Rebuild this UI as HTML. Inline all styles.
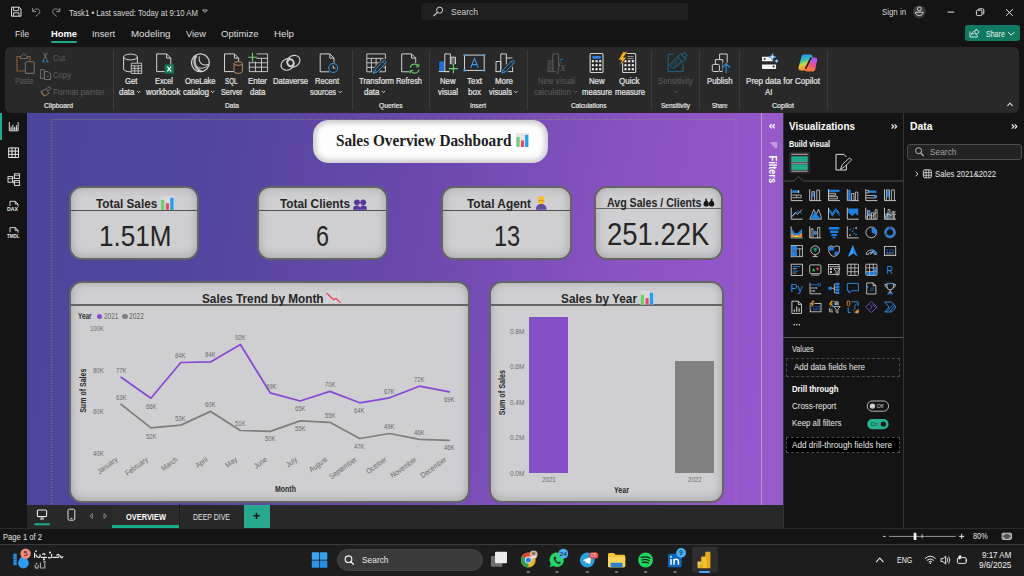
<!DOCTYPE html>
<html><head><meta charset="utf-8"><title>Power BI Desktop</title>
<style>
html,body{margin:0;padding:0;background:#141414;}
body{width:1024px;height:576px;overflow:hidden;position:relative;font-family:"Liberation Sans",sans-serif;}
#root{position:absolute;left:0;top:0;width:1024px;height:576px;overflow:hidden;background:#141414;}
svg{overflow:visible}
.a,.b{position:absolute;white-space:pre;transform-origin:0 50%;}
.a{font-family:"Liberation Sans",sans-serif;}
.b{font-family:"Liberation Serif",serif;}
</style></head><body><div id="root">
<span class="a" style="top:9px;font-size:8.8px;line-height:8.8px;color:#d6d6d6;left:68.60px;transform:scaleX(0.8817);">Task1 • Last saved: Today at 9:10 AM</span>
<div style="position:absolute;left:421px;top:3px;width:267px;height:17px;background:#1f1f1f;border-radius:3px;"></div>
<span class="a" style="top:8px;font-size:9.2px;line-height:9.2px;color:#cfcfcf;left:451.00px;transform:scaleX(0.9270);">Search</span>
<span class="a" style="top:8px;font-size:8.8px;line-height:8.8px;color:#d8d8d8;left:882.00px;transform:scaleX(0.8920);">Sign in</span>
<span class="a" style="top:29px;font-size:9.6px;line-height:9.6px;color:#dedede;left:15.00px;transform:scaleX(0.9051);">File</span>
<span class="a" style="top:29px;font-size:9.6px;line-height:9.6px;font-weight:700;color:#ffffff;left:51.00px;transform:scaleX(0.9754);">Home</span>
<span class="a" style="top:29px;font-size:9.6px;line-height:9.6px;color:#dedede;left:92.00px;transform:scaleX(0.9583);">Insert</span>
<span class="a" style="top:29px;font-size:9.6px;line-height:9.6px;color:#dedede;left:131.00px;transform:scaleX(1.0144);">Modeling</span>
<span class="a" style="top:29px;font-size:9.6px;line-height:9.6px;color:#dedede;left:186.00px;transform:scaleX(0.9697);">View</span>
<span class="a" style="top:29px;font-size:9.6px;line-height:9.6px;color:#dedede;left:221.00px;transform:scaleX(0.9905);">Optimize</span>
<span class="a" style="top:29px;font-size:9.6px;line-height:9.6px;color:#dedede;left:274.00px;transform:scaleX(1.0135);">Help</span>
<div style="position:absolute;left:51.2px;top:41px;width:25.6px;height:1.9px;background:#1aab8c;border-radius:1px;"></div>
<div style="position:absolute;left:964.5px;top:25.3px;width:55.6px;height:16.1px;background:#11795f;border-radius:3px;"></div>
<span class="a" style="top:30px;font-size:8.6px;line-height:8.6px;color:#e8f5f1;left:985.50px;transform:scaleX(0.8196);">Share</span>
<div style="position:absolute;left:5px;top:46.6px;width:1014px;height:66px;background:#292929;border-radius:6px;"></div>
<div style="position:absolute;left:112.5px;top:50px;width:1px;height:60px;background:#3b3b3b;"></div>
<div style="position:absolute;left:352px;top:50px;width:1px;height:60px;background:#3b3b3b;"></div>
<div style="position:absolute;left:428.5px;top:50px;width:1px;height:60px;background:#3b3b3b;"></div>
<div style="position:absolute;left:527px;top:50px;width:1px;height:60px;background:#3b3b3b;"></div>
<div style="position:absolute;left:651px;top:50px;width:1px;height:60px;background:#3b3b3b;"></div>
<div style="position:absolute;left:699px;top:50px;width:1px;height:60px;background:#3b3b3b;"></div>
<div style="position:absolute;left:739px;top:50px;width:1px;height:60px;background:#3b3b3b;"></div>
<div style="position:absolute;left:827px;top:50px;width:1px;height:60px;background:#3b3b3b;"></div>
<span class="a" style="top:77px;font-size:8.6px;line-height:8.6px;color:#5e5e5e;left:14.50px;transform:scaleX(0.8415);">Paste</span>
<span class="a" style="top:54px;font-size:8.6px;line-height:8.6px;color:#5e5e5e;left:53.10px;transform:scaleX(0.9121);">Cut</span>
<span class="a" style="top:71px;font-size:8.6px;line-height:8.6px;color:#5e5e5e;left:53.10px;transform:scaleX(0.8972);">Copy</span>
<span class="a" style="top:88px;font-size:8.6px;line-height:8.6px;color:#5e5e5e;left:53.10px;transform:scaleX(0.9250);">Format painter</span>
<span class="a" style="top:102px;font-size:7.4px;line-height:7.4px;color:#ececec;left:44.00px;transform:scaleX(0.9165);-webkit-text-stroke:.18px;">Clipboard</span>
<span class="a" style="top:77px;font-size:8.6px;line-height:8.6px;color:#e4e4e4;left:124.50px;transform:scaleX(0.9019);-webkit-text-stroke:.22px;">Get</span>
<span class="a" style="top:88px;font-size:8.6px;line-height:8.6px;color:#e4e4e4;left:119.00px;transform:scaleX(0.9262);-webkit-text-stroke:.22px;">data</span>
<span class="a" style="top:77px;font-size:8.6px;line-height:8.6px;color:#e4e4e4;left:154.50px;transform:scaleX(0.8565);-webkit-text-stroke:.22px;">Excel</span>
<span class="a" style="top:88px;font-size:8.6px;line-height:8.6px;color:#e4e4e4;left:146.00px;transform:scaleX(0.9380);-webkit-text-stroke:.22px;">workbook</span>
<span class="a" style="top:77px;font-size:8.6px;line-height:8.6px;color:#e4e4e4;left:185.00px;transform:scaleX(0.8742);-webkit-text-stroke:.22px;">OneLake</span>
<span class="a" style="top:88px;font-size:8.6px;line-height:8.6px;color:#e4e4e4;left:183.00px;transform:scaleX(0.9380);-webkit-text-stroke:.22px;">catalog</span>
<span class="a" style="top:77px;font-size:8.6px;line-height:8.6px;color:#e4e4e4;left:225.00px;transform:scaleX(0.7266);-webkit-text-stroke:.22px;">SQL</span>
<span class="a" style="top:88px;font-size:8.6px;line-height:8.6px;color:#e4e4e4;left:221.00px;transform:scaleX(0.8494);-webkit-text-stroke:.22px;">Server</span>
<span class="a" style="top:77px;font-size:8.6px;line-height:8.6px;color:#e4e4e4;left:248.00px;transform:scaleX(0.9247);-webkit-text-stroke:.22px;">Enter</span>
<span class="a" style="top:88px;font-size:8.6px;line-height:8.6px;color:#e4e4e4;left:250.00px;transform:scaleX(0.9262);-webkit-text-stroke:.22px;">data</span>
<span class="a" style="top:77px;font-size:8.6px;line-height:8.6px;color:#e4e4e4;left:273.00px;transform:scaleX(0.8935);-webkit-text-stroke:.22px;">Dataverse</span>
<span class="a" style="top:77px;font-size:8.6px;line-height:8.6px;color:#e4e4e4;left:315.00px;transform:scaleX(0.8812);-webkit-text-stroke:.22px;">Recent</span>
<span class="a" style="top:88px;font-size:8.6px;line-height:8.6px;color:#e4e4e4;left:310.00px;transform:scaleX(0.8640);-webkit-text-stroke:.22px;">sources</span>
<span class="a" style="top:102px;font-size:7.4px;line-height:7.4px;color:#ececec;left:225.00px;transform:scaleX(0.8960);-webkit-text-stroke:.18px;">Data</span>
<span class="a" style="top:77px;font-size:8.6px;line-height:8.6px;color:#e4e4e4;left:358.50px;transform:scaleX(0.9010);-webkit-text-stroke:.22px;">Transform</span>
<span class="a" style="top:88px;font-size:8.6px;line-height:8.6px;color:#e4e4e4;left:364.00px;transform:scaleX(0.9262);-webkit-text-stroke:.22px;">data</span>
<span class="a" style="top:77px;font-size:8.6px;line-height:8.6px;color:#e4e4e4;left:396.00px;transform:scaleX(0.8640);-webkit-text-stroke:.22px;">Refresh</span>
<span class="a" style="top:102px;font-size:7.4px;line-height:7.4px;color:#ececec;left:378.50px;transform:scaleX(0.9077);-webkit-text-stroke:.18px;">Queries</span>
<span class="a" style="top:77px;font-size:8.6px;line-height:8.6px;color:#e4e4e4;left:440.00px;transform:scaleX(0.9010);-webkit-text-stroke:.22px;">New</span>
<span class="a" style="top:88px;font-size:8.6px;line-height:8.6px;color:#e4e4e4;left:438.00px;transform:scaleX(0.9097);-webkit-text-stroke:.22px;">visual</span>
<span class="a" style="top:77px;font-size:8.6px;line-height:8.6px;color:#e4e4e4;left:467.00px;transform:scaleX(0.9514);-webkit-text-stroke:.22px;">Text</span>
<span class="a" style="top:88px;font-size:8.6px;line-height:8.6px;color:#e4e4e4;left:468.00px;transform:scaleX(0.9380);-webkit-text-stroke:.22px;">box</span>
<span class="a" style="top:77px;font-size:8.6px;line-height:8.6px;color:#e4e4e4;left:495.00px;transform:scaleX(0.9187);-webkit-text-stroke:.22px;">More</span>
<span class="a" style="top:88px;font-size:8.6px;line-height:8.6px;color:#e4e4e4;left:488.50px;transform:scaleX(0.8751);-webkit-text-stroke:.22px;">visuals</span>
<span class="a" style="top:102px;font-size:7.4px;line-height:7.4px;color:#ececec;left:470.00px;transform:scaleX(0.8656);-webkit-text-stroke:.18px;">Insert</span>
<span class="a" style="top:77px;font-size:8.6px;line-height:8.6px;color:#5e5e5e;left:538.00px;transform:scaleX(0.8902);">New visual</span>
<span class="a" style="top:88px;font-size:8.6px;line-height:8.6px;color:#5e5e5e;left:534.00px;transform:scaleX(0.9111);">calculation</span>
<span class="a" style="top:77px;font-size:8.6px;line-height:8.6px;color:#e4e4e4;left:589.00px;transform:scaleX(0.9010);-webkit-text-stroke:.22px;">New</span>
<span class="a" style="top:88px;font-size:8.6px;line-height:8.6px;color:#e4e4e4;left:582.00px;transform:scaleX(0.8972);-webkit-text-stroke:.22px;">measure</span>
<span class="a" style="top:77px;font-size:8.6px;line-height:8.6px;color:#e4e4e4;left:619.00px;transform:scaleX(0.9331);-webkit-text-stroke:.22px;">Quick</span>
<span class="a" style="top:88px;font-size:8.6px;line-height:8.6px;color:#e4e4e4;left:614.50px;transform:scaleX(0.8972);-webkit-text-stroke:.22px;">measure</span>
<span class="a" style="top:102px;font-size:7.4px;line-height:7.4px;color:#ececec;left:571.00px;transform:scaleX(0.8816);-webkit-text-stroke:.18px;">Calculations</span>
<span class="a" style="top:77px;font-size:8.6px;line-height:8.6px;color:#5e5e5e;left:658.00px;transform:scaleX(0.9047);">Sensitivity</span>
<span class="a" style="top:102px;font-size:7.4px;line-height:7.4px;color:#ececec;left:661.00px;transform:scaleX(0.8714);-webkit-text-stroke:.18px;">Sensitivity</span>
<span class="a" style="top:77px;font-size:8.6px;line-height:8.6px;color:#e4e4e4;left:707.00px;transform:scaleX(0.9047);-webkit-text-stroke:.22px;">Publish</span>
<span class="a" style="top:102px;font-size:7.4px;line-height:7.4px;color:#ececec;left:711.50px;transform:scaleX(0.7854);-webkit-text-stroke:.18px;">Share</span>
<span class="a" style="top:77px;font-size:8.6px;line-height:8.6px;color:#e4e4e4;left:746.00px;transform:scaleX(0.9388);-webkit-text-stroke:.22px;">Prep data for Copilot</span>
<span class="a" style="top:88px;font-size:8.6px;line-height:8.6px;color:#e4e4e4;left:765.00px;transform:scaleX(0.9231);-webkit-text-stroke:.22px;">AI</span>
<span class="a" style="top:102px;font-size:7.4px;line-height:7.4px;color:#ececec;left:772.00px;transform:scaleX(0.9559);-webkit-text-stroke:.18px;">Copilot</span>
<div style="position:absolute;left:0px;top:113px;width:27px;height:415px;background:#141414;"></div>
<div style="position:absolute;left:0px;top:113px;width:2px;height:27px;background:#1aab8c;"></div>
<div style="position:absolute;left:27px;top:113px;width:756px;height:391.6px;background:linear-gradient(100deg,#4a469b 0%,#50469d 22%,#6b49ac 50%,#8953c2 75%,#9a58cf 100%);"></div>
<svg style="position:absolute;left:0;top:0" width="1024" height="576" viewBox="0 0 1024 576" fill="none"><path d="M51.8,504 V119.4 H736 V504" stroke="#9c9678" stroke-opacity=".8" stroke-width="1" stroke-dasharray="1.07 1.6"/></svg>
<div style="position:absolute;left:760.9px;top:113px;width:22.3px;height:391.6px;background:#975ac9;border-left:.9px solid #b39fca;box-sizing:border-box;"></div>
<div style="position:absolute;left:313px;top:120px;width:235px;height:42.5px;box-sizing:border-box;border:1px solid #d2d2d4;border-radius:15px;background:#fdfdfd;box-shadow:inset 0 0 5px 2px rgba(150,150,156,.5);"></div>
<span class="b" style="top:133px;font-size:16px;line-height:16px;font-weight:700;color:#1c1c1c;left:335.50px;transform:scaleX(0.9538);">Sales Overview Dashboard</span>
<div style="position:absolute;left:68.6px;top:185.6px;width:130.3px;height:74.1px;box-sizing:border-box;border:2.5px solid #656565;border-radius:13px;background:#cfcfd1;box-shadow:inset 0 -1px 8px 1px rgba(90,90,95,.33);"></div>
<div style="position:absolute;left:70.1px;top:209.8px;width:127.30000000000001px;height:1.0px;background:#505050;"></div>
<div style="position:absolute;left:256.9px;top:185.6px;width:130.7px;height:74.1px;box-sizing:border-box;border:2.5px solid #656565;border-radius:13px;background:#cfcfd1;box-shadow:inset 0 -1px 8px 1px rgba(90,90,95,.33);"></div>
<div style="position:absolute;left:258.4px;top:209.8px;width:127.69999999999999px;height:1.0px;background:#505050;"></div>
<div style="position:absolute;left:441.2px;top:185.6px;width:130.4px;height:74.1px;box-sizing:border-box;border:2.5px solid #656565;border-radius:13px;background:#cfcfd1;box-shadow:inset 0 -1px 8px 1px rgba(90,90,95,.33);"></div>
<div style="position:absolute;left:442.7px;top:209.8px;width:127.4px;height:1.0px;background:#505050;"></div>
<div style="position:absolute;left:593.6px;top:185.6px;width:129.9px;height:74.1px;box-sizing:border-box;border:2.5px solid #656565;border-radius:13px;background:#cfcfd1;box-shadow:inset 0 -1px 8px 1px rgba(90,90,95,.33);"></div>
<div style="position:absolute;left:595.1px;top:207.8px;width:126.9px;height:1.4px;background:#6a6a6a;"></div>
<span class="a" style="top:197px;font-size:13px;line-height:13px;font-weight:700;color:#252525;left:95.75px;transform:scaleX(0.9049);">Total Sales</span>
<span class="a" style="top:197px;font-size:13px;line-height:13px;font-weight:700;color:#252525;left:280.00px;transform:scaleX(0.9085);">Total Clients</span>
<span class="a" style="top:197px;font-size:13px;line-height:13px;font-weight:700;color:#252525;left:467.00px;transform:scaleX(0.9137);">Total Agent</span>
<span class="a" style="top:197px;font-size:12.5px;line-height:12.5px;font-weight:700;color:#252525;left:607.10px;transform:scaleX(0.8484);">Avg Sales / Clients</span>
<span class="a" style="top:221px;font-size:30px;line-height:30px;color:#252525;left:98.75px;transform:scaleX(0.8694);">1.51M</span>
<span class="a" style="top:221px;font-size:30px;line-height:30px;color:#252525;left:316.00px;transform:scaleX(0.7790);">6</span>
<span class="a" style="top:221px;font-size:30px;line-height:30px;color:#252525;left:494.10px;transform:scaleX(0.7850);">13</span>
<span class="a" style="top:219px;font-size:31px;line-height:31px;color:#252525;left:607.10px;transform:scaleX(0.8866);">251.22K</span>
<div style="position:absolute;left:68.7px;top:280.8px;width:401.5px;height:222px;box-sizing:border-box;border:2.5px solid #656565;border-radius:13px;background:#cfcfd1;box-shadow:inset 0 -1px 8px 1px rgba(90,90,95,.33);"></div>
<div style="position:absolute;left:70.2px;top:304.2px;width:398.5px;height:1.4px;background:#646464;"></div>
<div style="position:absolute;left:488.9px;top:280.8px;width:234.7px;height:222px;box-sizing:border-box;border:2.5px solid #656565;border-radius:13px;background:#cfcfd1;box-shadow:inset 0 -1px 8px 1px rgba(90,90,95,.33);"></div>
<div style="position:absolute;left:490.4px;top:304.2px;width:231.7px;height:1.4px;background:#646464;"></div>
<span class="a" style="top:292px;font-size:13.5px;line-height:13.5px;font-weight:700;color:#252525;left:201.50px;transform:scaleX(0.8708);">Sales Trend by Month</span>
<span class="a" style="top:292px;font-size:13.5px;line-height:13.5px;font-weight:700;color:#252525;left:561.00px;transform:scaleX(0.8753);">Sales by Year</span>
<div style="position:absolute;left:783px;top:113px;width:241px;height:415px;background:#141414;"></div>
<div style="position:absolute;left:783px;top:113px;width:1px;height:415px;background:#333;"></div>
<div style="position:absolute;left:903px;top:113px;width:1px;height:415px;background:#333;"></div>
<span class="a" style="top:121px;font-size:11px;line-height:11px;font-weight:700;color:#ffffff;left:789.00px;transform:scaleX(0.9022);">Visualizations</span>
<span class="a" style="top:141px;font-size:8.2px;line-height:8.2px;font-weight:700;color:#ffffff;left:789.00px;transform:scaleX(0.8922);">Build visual</span>
<span class="a" style="top:121px;font-size:11px;line-height:11px;font-weight:700;color:#ffffff;left:909.50px;transform:scaleX(0.9436);">Data</span>
<div style="position:absolute;left:907px;top:143.5px;width:114.5px;height:16px;box-sizing:border-box;border:1px solid #4c4c4c;border-radius:3px;background:#232323;"></div>
<span class="a" style="top:148px;font-size:9.2px;line-height:9.2px;color:#a0a0a0;left:929.50px;transform:scaleX(0.9099);">Search</span>
<span class="a" style="top:170px;font-size:8.6px;line-height:8.6px;color:#e6e6e6;left:935.00px;transform:scaleX(0.8989);">Sales 2021&amp;2022</span>
<div style="position:absolute;left:783px;top:337px;width:120px;height:1px;background:#555;"></div>
<span class="a" style="top:345px;font-size:8.6px;line-height:8.6px;color:#e6e6e6;left:791.50px;transform:scaleX(0.8385);">Values</span>
<div style="position:absolute;left:786px;top:358px;width:113.5px;height:18.5px;box-sizing:border-box;border:1px dashed #4a4a4a;"></div>
<span class="a" style="top:363px;font-size:8.6px;line-height:8.6px;color:#e6e6e6;left:793.50px;transform:scaleX(0.9287);">Add data fields here</span>
<span class="a" style="top:385px;font-size:8.6px;line-height:8.6px;font-weight:700;color:#ffffff;left:791.50px;transform:scaleX(0.9018);">Drill through</span>
<span class="a" style="top:402px;font-size:8.6px;line-height:8.6px;color:#e6e6e6;left:791.50px;transform:scaleX(0.9254);">Cross-report</span>
<span class="a" style="top:419px;font-size:8.6px;line-height:8.6px;color:#e6e6e6;left:791.50px;transform:scaleX(0.9169);">Keep all filters</span>
<div style="position:absolute;left:786px;top:436.5px;width:113.5px;height:16.5px;box-sizing:border-box;border:1px dashed #4a4a4a;background:#000;"></div>
<span class="a" style="top:441px;font-size:8.6px;line-height:8.6px;color:#e6e6e6;left:792.00px;transform:scaleX(0.9515);">Add drill-through fields here</span>
<div style="position:absolute;left:27px;top:504.6px;width:756px;height:23.4px;background:#282828;"></div>
<div style="position:absolute;left:112.2px;top:504.6px;width:67px;height:23.4px;background:#2b2b2b;"></div>
<div style="position:absolute;left:112.2px;top:525.2px;width:67px;height:2.8px;background:#1aab8c;"></div>
<div style="position:absolute;left:179.2px;top:504px;width:1px;height:24px;background:#1c1c1c;"></div>
<span class="a" style="top:513px;font-size:8.4px;line-height:8.4px;font-weight:700;color:#ffffff;left:125.80px;transform:scaleX(0.8867);">OVERVIEW</span>
<span class="a" style="top:513px;font-size:8.4px;line-height:8.4px;color:#e0e0e0;left:192.80px;transform:scaleX(0.8286);">DEEP DIVE</span>
<div style="position:absolute;left:243.9px;top:504.6px;width:26.3px;height:23.2px;background:#28a98e;"></div>
<div style="position:absolute;left:0px;top:527.8px;width:1024px;height:17px;background:#141414;"></div>
<div style="position:absolute;left:0px;top:527.8px;width:1024px;height:0.9px;background:#2c2c2c;"></div>
<span class="a" style="top:533px;font-size:8.6px;line-height:8.6px;color:#e0e0e0;left:2.70px;transform:scaleX(0.8893);">Page 1 of 2</span>
<span class="a" style="top:532px;font-size:8.6px;line-height:8.6px;color:#e0e0e0;left:973.40px;transform:scaleX(0.8545);">80%</span>
<div style="position:absolute;left:0px;top:544.4px;width:1024px;height:31.6px;background:#1d1d1d;"></div>
<div style="position:absolute;left:0px;top:544.2px;width:1024px;height:0.9px;background:#3a3a3a;"></div>
<div style="position:absolute;left:336.9px;top:549px;width:145.8px;height:21.6px;border-radius:10.8px;background:#3a3a3a;box-sizing:border-box;border:1px solid #444;"></div>
<span class="a" style="top:555px;font-size:9.6px;line-height:9.6px;color:#e8e8e8;left:361.50px;transform:scaleX(0.8715);">Search</span>
<span class="a" style="top:557px;font-size:8.2px;line-height:8.2px;color:#f0f0f0;left:897.20px;transform:scaleX(0.8563);">ENG</span>
<span class="a" style="top:551px;font-size:8.8px;line-height:8.8px;color:#f0f0f0;left:981.70px;transform:scaleX(0.9076);">9:17 AM</span>
<span class="a" style="top:561px;font-size:8.8px;line-height:8.8px;color:#f0f0f0;left:978.50px;transform:scaleX(0.9489);">9/6/2025</span>
<span class="a" style="top:312px;font-size:8.6px;line-height:8.6px;font-weight:700;color:#333;left:78.40px;transform:scaleX(0.7484);">Year</span>
<div style="position:absolute;left:96.6px;top:313.8px;width:5.4px;height:5.4px;border-radius:50%;background:#8a4fd8;"></div>
<span class="a" style="top:313px;font-size:8.2px;line-height:8.2px;color:#6b6b6b;left:103.50px;transform:scaleX(0.7904);">2021</span>
<div style="position:absolute;left:122.2px;top:313.8px;width:5.4px;height:5.4px;border-radius:50%;background:#808080;"></div>
<span class="a" style="top:313px;font-size:8.2px;line-height:8.2px;color:#6b6b6b;left:128.50px;transform:scaleX(0.8178);">2022</span>
<span class="a" style="top:325px;font-size:7.6px;line-height:7.6px;color:#6b6b6b;left:90.40px;transform:scaleX(0.7662);">100K</span>
<span class="a" style="top:367px;font-size:7.6px;line-height:7.6px;color:#6b6b6b;left:93.30px;transform:scaleX(0.7917);">80K</span>
<span class="a" style="top:408px;font-size:7.6px;line-height:7.6px;color:#6b6b6b;left:93.30px;transform:scaleX(0.7917);">60K</span>
<span class="a" style="top:450px;font-size:7.6px;line-height:7.6px;color:#6b6b6b;left:93.30px;transform:scaleX(0.7917);">40K</span>
<svg style="position:absolute;left:60px;top:300px;" width="420" height="200" viewBox="0 0 420 200" fill="none"><polyline points="61.1,104.4 90.9,127.9 120.8,125.1 150.6,111.4 180.4,130.5 210.2,131.3 240.1,120.9 269.9,122.3 299.7,138.5 329.6,133.5 359.4,139.3 389.2,140.3" stroke="#7e7e7e" stroke-width="1.75" stroke-linejoin="round" stroke-linecap="round" fill="none"/><polyline points="61.1,77.3 90.9,98.2 120.8,62.5 150.6,61.9 180.4,44.5 210.2,92.8 240.1,101.0 269.9,91.4 299.7,102.8 329.6,97.8 359.4,86.2 389.2,91.8" stroke="#8748d4" stroke-width="1.75" stroke-linejoin="round" stroke-linecap="round" fill="none"/></svg>
<span class="a" style="top:367px;font-size:7.6px;line-height:7.6px;color:#6b6b6b;left:115.80px;transform:scaleX(0.7843);">77K</span>
<span class="a" style="top:403px;font-size:7.6px;line-height:7.6px;color:#6b6b6b;left:145.63px;transform:scaleX(0.7843);">66K</span>
<span class="a" style="top:352px;font-size:7.6px;line-height:7.6px;color:#6b6b6b;left:175.46px;transform:scaleX(0.7843);">84K</span>
<span class="a" style="top:351px;font-size:7.6px;line-height:7.6px;color:#6b6b6b;left:205.29px;transform:scaleX(0.7843);">84K</span>
<span class="a" style="top:334px;font-size:7.6px;line-height:7.6px;color:#6b6b6b;left:235.12px;transform:scaleX(0.7843);">92K</span>
<span class="a" style="top:383px;font-size:7.6px;line-height:7.6px;color:#6b6b6b;left:266.45px;transform:scaleX(0.7843);">69K</span>
<span class="a" style="top:405px;font-size:7.6px;line-height:7.6px;color:#6b6b6b;left:294.78px;transform:scaleX(0.7843);">65K</span>
<span class="a" style="top:381px;font-size:7.6px;line-height:7.6px;color:#6b6b6b;left:324.61px;transform:scaleX(0.7843);">70K</span>
<span class="a" style="top:407px;font-size:7.6px;line-height:7.6px;color:#6b6b6b;left:354.44px;transform:scaleX(0.7843);">64K</span>
<span class="a" style="top:388px;font-size:7.6px;line-height:7.6px;color:#6b6b6b;left:384.27px;transform:scaleX(0.7843);">67K</span>
<span class="a" style="top:376px;font-size:7.6px;line-height:7.6px;color:#6b6b6b;left:414.10px;transform:scaleX(0.7843);">72K</span>
<span class="a" style="top:396px;font-size:7.6px;line-height:7.6px;color:#6b6b6b;left:443.93px;transform:scaleX(0.7843);">69K</span>
<span class="a" style="top:394px;font-size:7.6px;line-height:7.6px;color:#6b6b6b;left:115.80px;transform:scaleX(0.7843);">63K</span>
<span class="a" style="top:433px;font-size:7.6px;line-height:7.6px;color:#6b6b6b;left:145.63px;transform:scaleX(0.7843);">52K</span>
<span class="a" style="top:415px;font-size:7.6px;line-height:7.6px;color:#6b6b6b;left:175.46px;transform:scaleX(0.7843);">53K</span>
<span class="a" style="top:401px;font-size:7.6px;line-height:7.6px;color:#6b6b6b;left:205.29px;transform:scaleX(0.7843);">60K</span>
<span class="a" style="top:420px;font-size:7.6px;line-height:7.6px;color:#6b6b6b;left:235.12px;transform:scaleX(0.7843);">51K</span>
<span class="a" style="top:435px;font-size:7.6px;line-height:7.6px;color:#6b6b6b;left:264.95px;transform:scaleX(0.7843);">50K</span>
<span class="a" style="top:425px;font-size:7.6px;line-height:7.6px;color:#6b6b6b;left:294.78px;transform:scaleX(0.7843);">55K</span>
<span class="a" style="top:412px;font-size:7.6px;line-height:7.6px;color:#6b6b6b;left:324.61px;transform:scaleX(0.7843);">55K</span>
<span class="a" style="top:443px;font-size:7.6px;line-height:7.6px;color:#6b6b6b;left:354.44px;transform:scaleX(0.7843);">47K</span>
<span class="a" style="top:423px;font-size:7.6px;line-height:7.6px;color:#6b6b6b;left:384.27px;transform:scaleX(0.7843);">49K</span>
<span class="a" style="top:429px;font-size:7.6px;line-height:7.6px;color:#6b6b6b;left:414.10px;transform:scaleX(0.7843);">46K</span>
<span class="a" style="top:444px;font-size:7.6px;line-height:7.6px;color:#6b6b6b;left:443.93px;transform:scaleX(0.7843);">46K</span>
<span class="a" style="right:906.5px;top:454.6px;font-size:7.6px;line-height:8px;color:#6b6b6b;transform-origin:100% 50%;transform:rotate(-36deg) scaleX(.86);">January</span>
<span class="a" style="right:876.7px;top:454.6px;font-size:7.6px;line-height:8px;color:#6b6b6b;transform-origin:100% 50%;transform:rotate(-36deg) scaleX(.86);">February</span>
<span class="a" style="right:846.8px;top:454.6px;font-size:7.6px;line-height:8px;color:#6b6b6b;transform-origin:100% 50%;transform:rotate(-36deg) scaleX(.86);">March</span>
<span class="a" style="right:817.0px;top:454.6px;font-size:7.6px;line-height:8px;color:#6b6b6b;transform-origin:100% 50%;transform:rotate(-36deg) scaleX(.86);">April</span>
<span class="a" style="right:787.2px;top:454.6px;font-size:7.6px;line-height:8px;color:#6b6b6b;transform-origin:100% 50%;transform:rotate(-36deg) scaleX(.86);">May</span>
<span class="a" style="right:757.4px;top:454.6px;font-size:7.6px;line-height:8px;color:#6b6b6b;transform-origin:100% 50%;transform:rotate(-36deg) scaleX(.86);">June</span>
<span class="a" style="right:727.5px;top:454.6px;font-size:7.6px;line-height:8px;color:#6b6b6b;transform-origin:100% 50%;transform:rotate(-36deg) scaleX(.86);">July</span>
<span class="a" style="right:697.7px;top:454.6px;font-size:7.6px;line-height:8px;color:#6b6b6b;transform-origin:100% 50%;transform:rotate(-36deg) scaleX(.86);">August</span>
<span class="a" style="right:667.9px;top:454.6px;font-size:7.6px;line-height:8px;color:#6b6b6b;transform-origin:100% 50%;transform:rotate(-36deg) scaleX(.86);">September</span>
<span class="a" style="right:638.0px;top:454.6px;font-size:7.6px;line-height:8px;color:#6b6b6b;transform-origin:100% 50%;transform:rotate(-36deg) scaleX(.86);">October</span>
<span class="a" style="right:608.2px;top:454.6px;font-size:7.6px;line-height:8px;color:#6b6b6b;transform-origin:100% 50%;transform:rotate(-36deg) scaleX(.86);">November</span>
<span class="a" style="right:578.4px;top:454.6px;font-size:7.6px;line-height:8px;color:#6b6b6b;transform-origin:100% 50%;transform:rotate(-36deg) scaleX(.86);">December</span>
<span class="a" style="left:60px;top:389px;width:46px;text-align:center;font-size:8.4px;line-height:9px;font-weight:700;color:#2a2a2a;transform-origin:50% 50%;transform:rotate(-90deg) scaleX(.84);">Sum of Sales</span>
<span class="a" style="top:485px;font-size:8.6px;line-height:8.6px;font-weight:700;color:#2a2a2a;left:274.60px;transform:scaleX(0.8107);">Month</span>
<div style="position:absolute;left:529.4px;top:316.8px;width:38.8px;height:156.5px;background:#8350c6;"></div>
<div style="position:absolute;left:675.4px;top:361.4px;width:38.6px;height:111.9px;background:#818181;"></div>
<span class="a" style="top:328px;font-size:7.6px;line-height:7.6px;color:#6b6b6b;left:509.80px;transform:scaleX(0.8466);">0.8M</span>
<span class="a" style="top:363px;font-size:7.6px;line-height:7.6px;color:#6b6b6b;left:509.80px;transform:scaleX(0.8466);">0.6M</span>
<span class="a" style="top:399px;font-size:7.6px;line-height:7.6px;color:#6b6b6b;left:509.80px;transform:scaleX(0.8466);">0.4M</span>
<span class="a" style="top:434px;font-size:7.6px;line-height:7.6px;color:#6b6b6b;left:509.80px;transform:scaleX(0.8466);">0.2M</span>
<span class="a" style="top:470px;font-size:7.6px;line-height:7.6px;color:#6b6b6b;left:509.80px;transform:scaleX(0.8466);">0.0M</span>
<span class="a" style="top:476px;font-size:7.8px;line-height:7.8px;color:#6b6b6b;left:542.00px;transform:scaleX(0.7950);">2021</span>
<span class="a" style="top:476px;font-size:7.8px;line-height:7.8px;color:#6b6b6b;left:688.00px;transform:scaleX(0.7834);">2022</span>
<span class="a" style="top:486px;font-size:8.6px;line-height:8.6px;font-weight:700;color:#2a2a2a;left:614.20px;transform:scaleX(0.8255);">Year</span>
<span class="a" style="left:479.2px;top:391.2px;width:46px;text-align:center;font-size:8.4px;line-height:9px;font-weight:700;color:#2a2a2a;transform-origin:50% 50%;transform:rotate(-90deg) scaleX(.86);">Sum of Sales</span>
<svg style="position:absolute;left:0;top:0;" width="1024" height="576" viewBox="0 0 1024 576" fill="none"><path d="M21,56.5 H17 V71 H25" stroke="#8a5a30" stroke-width="1.2" fill="none"/><path d="M27,56.5 H30 V61" stroke="#8a5a30" stroke-width="1.2" fill="none"/><path d="M20,57.3 L23.8,53.6 L27.6,57.3 V58.5 H20 Z" stroke="#6c6c6c" stroke-width="1" fill="none"/><rect x="25.4" y="61.7" width="8.8" height="11.7" rx="1" stroke="#6c6c6c" stroke-width="1.1" fill="#292929"/><path d="M43.6,52.8 L47,59.7 M47,52.8 L43.6,59.7" stroke="#7a7a7a" stroke-width="0.9"/><circle cx="43.4" cy="61.3" r="1.3" fill="#2b6c98"/><circle cx="47.2" cy="61.3" r="1.3" fill="#2b6c98"/><path d="M40.4,69.6 H44.3 V78.4 H40.4 Z" stroke="#757575" stroke-width="0.9" fill="none"/><path d="M44.5,71.6 H48.2 L50.6,74 V79.5 H44.5 Z M47.2,76.5 H48.6" stroke="#757575" stroke-width="0.9" fill="#292929"/><path d="M41,91.5 L46,89 L49,93.5 L44.5,96 Z" stroke="#7a7a7a" stroke-width="0.9" fill="none"/><path d="M46.5,88.8 L49.5,86.6 L50.8,88.6 L48.3,90.6" stroke="#7a7a7a" stroke-width="0.9" fill="none"/><path d="M41,91.8 L44.4,96" stroke="#9a6a35" stroke-width="1.3"/><path d="M123.6,57 V69.2 A7,2.6 0 0 0 131,71.8 M137.4,57 V63" stroke="#d2d2d2" stroke-width="1" fill="none"/><ellipse cx="130.5" cy="57" rx="6.9" ry="2.9" stroke="#d2d2d2" stroke-width="1" fill="none"/><rect x="131.3" y="63.2" width="10.4" height="10.3" fill="#292929"/><path d="M131.3,63.2 H141.7 V73.5 H131.3 Z M134.77,65.78 V73.5 M138.23,65.78 V73.5 M131.3,65.78 H141.7 M131.3,68.35 H141.7 M131.3,70.92 H141.7" stroke="#d2d2d2" stroke-width="0.85" fill="none"/><path d="M137.0,90.95 L138.7,92.64999999999999 L140.39999999999998,90.95" stroke="#d2d2d2" stroke-width="1.0" fill="none"/><path d="M156.7,53.9 H166.60000000000002 L170.8,58.1 V71.6 H156.7 Z M166.60000000000002,53.9 V58.1 H170.8" stroke="#d2d2d2" stroke-width="1.0" fill="none" stroke-linejoin="round"/><rect x="164.6" y="64.4" width="9.2" height="9.2" fill="#177a57"/><path d="M167.3,66.6 L171.1,71.4 M171.1,66.6 L167.3,71.4" stroke="#fff" stroke-width="1.2"/><circle cx="200.4" cy="62.8" r="8.9" stroke="#d2d2d2" stroke-width="1.3" fill="none"/><path d="M196.5,55.5 C193,60 194,68 201,71.3" stroke="#d2d2d2" stroke-width="2.4" fill="none" opacity=".85"/><path d="M199.5,56.5 C198,62 202,66.5 208.8,64.5" stroke="#d2d2d2" stroke-width="1.1" fill="none"/><path d="M196,66 C199,69 204.5,69 208.3,65.5" stroke="#d2d2d2" stroke-width="1" fill="none"/><path d="M210.8,90.95 L212.5,92.64999999999999 L214.2,90.95" stroke="#d2d2d2" stroke-width="1.0" fill="none"/><path d="M224.5,53.9 H234.4 L238.6,58.1 V71.6 H224.5 Z M234.4,53.9 V58.1 H238.6" stroke="#d2d2d2" stroke-width="1.0" fill="none" stroke-linejoin="round"/><rect x="234" y="61.5" width="8.4" height="12" fill="#292929"/><path d="M234,63.5 V71.6 A4.2,1.8 0 0 0 242.4,71.6 V63.5" stroke="#b5875a" stroke-width="1" fill="none"/><ellipse cx="238.2" cy="63.5" rx="4.2" ry="1.8" stroke="#b5875a" stroke-width="1" fill="none"/><path d="M249.3,53.9 H267.6 V71.6 H249.3 Z M255.40,58.32 V71.6 M261.50,58.32 V71.6 M249.3,58.32 H267.6 M249.3,62.75 H267.6 M249.3,67.17 H267.6" stroke="#d2d2d2" stroke-width="0.9" fill="none"/><rect x="248" y="52.6" width="8.5" height="9" fill="#292929"/><path d="M248.2,57.3 H257 M252.5,52.8 V61.8" stroke="#6fd46f" stroke-width="1.1"/><g transform="rotate(-28 290.5 62.8)" stroke="#d2d2d2" fill="none"><ellipse cx="287.2" cy="62.8" rx="6.8" ry="5.6" stroke-width="1.15"/><ellipse cx="293.8" cy="62.8" rx="6.8" ry="5.6" stroke-width="1.15"/><ellipse cx="290.5" cy="62.8" rx="3" ry="3.2" stroke-width="1.5"/></g><path d="M320.2,53.9 H329.8 L334,58.1 V71.8 H320.2 Z M329.8,53.9 V58.1 H334" stroke="#d2d2d2" stroke-width="1.0" fill="none" stroke-linejoin="round"/><circle cx="333.2" cy="68" r="5.6" fill="#292929"/><circle cx="333.2" cy="68" r="4.5" stroke="#2f8fd8" stroke-width="1.1" fill="none"/><path d="M333.2,65.2 V68.2 H335.4" stroke="#d8d8d8" stroke-width="0.9" fill="none"/><path d="M338.5,90.95 L340.2,92.64999999999999 L341.9,90.95" stroke="#d2d2d2" stroke-width="1.0" fill="none"/><path d="M366.8,53.9 H385.4 V71.8 H366.8 Z M371.45,58.38 V71.8 M376.10,58.38 V71.8 M380.75,58.38 V71.8 M366.8,58.38 H385.4 M366.8,62.85 H385.4 M366.8,67.33 H385.4" stroke="#d2d2d2" stroke-width="0.9" fill="none"/><path d="M372.6,74.2 L374.2,69.6 L384.2,59.2 L387.3,62 L377.2,72.6 Z" fill="#292929" stroke="#292929" stroke-width="2"/><path d="M373.2,73.4 L374.6,70 L384.3,60 L386.6,62.2 L376.8,72.2 Z M374.6,70 L376.8,72.2 M382.8,61.5 L385.1,63.7" stroke="#2f8fd8" stroke-width="1" fill="none" stroke-linejoin="round"/><path d="M373.2,73.4 L374,71.3 L375.4,72.6 Z" fill="#2f8fd8"/><path d="M381.7,90.95 L383.4,92.64999999999999 L385.09999999999997,90.95" stroke="#d2d2d2" stroke-width="1.0" fill="none"/><path d="M401.7,53.9 H411.5 L415.7,58.1 V71.8 H401.7 Z M411.5,53.9 V58.1 H415.7" stroke="#d2d2d2" stroke-width="1.0" fill="none" stroke-linejoin="round"/><circle cx="414.6" cy="68.6" r="5.9" fill="#292929"/><path d="M410.2,67.6 A4.5,4.5 0 0 1 418.4,66.2 M419,69.6 A4.5,4.5 0 0 1 410.8,71" stroke="#62c962" stroke-width="1.1" fill="none"/><path d="M418.9,63.8 V66.7 H416" stroke="#62c962" stroke-width="1" fill="none"/><path d="M410.3,73.4 V70.5 H413.2" stroke="#62c962" stroke-width="1" fill="none"/><rect x="439.2" y="61.4" width="5" height="10.2" fill="#1f6fd2"/><path d="M444.8,71.6 V53.9 H450.3 V71.6 Z" stroke="#d2d2d2" stroke-width="1" fill="none"/><path d="M450.9,57.2 H455.5 V64.5 H450.9 Z" stroke="#d2d2d2" stroke-width="1" fill="#666"/><path d="M438.6,71.6 H451" stroke="#d2d2d2" stroke-width="1"/><rect x="449.4" y="64.2" width="8.4" height="9" fill="#292929"/><path d="M448.8,68.6 H458 M453.4,64 V73.2" stroke="#6fd46f" stroke-width="1.1"/><rect x="464.5" y="55.1" width="19.7" height="15.3" stroke="#d2d2d2" stroke-width="1" fill="none"/><rect x="463.4" y="54.0" width="2.2" height="2.2" fill="#3a9be8"/><rect x="483.09999999999997" y="54.0" width="2.2" height="2.2" fill="#3a9be8"/><rect x="463.4" y="69.30000000000001" width="2.2" height="2.2" fill="#3a9be8"/><rect x="483.09999999999997" y="69.30000000000001" width="2.2" height="2.2" fill="#3a9be8"/><path d="M470.7,67.8 L474.5,58.4 L478.3,67.8 M472.1,64.6 H476.9" stroke="#3a9be8" stroke-width="1.05" fill="none"/><path d="M496,71.6 V61.5 H500.8 V71.6 M500.8,71.6 V53.9 H506.3 V71.6 M506.3,58 H512.6 V71.6 M495.4,71.6 H513.2" stroke="#d2d2d2" stroke-width="1" fill="none"/><path d="M501.2,74 L502.8,69.4 L512.6,59.2 L515.6,62 L505.8,72.4 Z" fill="#292929" stroke="#292929" stroke-width="2"/><path d="M501.8,73.2 L503.2,69.8 L512.7,60 L515,62.2 L505.4,72 Z M503.2,69.8 L505.4,72 M511.2,61.5 L513.5,63.7" stroke="#2f8fd8" stroke-width="1" fill="none" stroke-linejoin="round"/><path d="M501.8,73.2 L502.6,71.1 L504,72.4 Z" fill="#2f8fd8"/><path d="M514.0999999999999,90.95 L515.8,92.64999999999999 L517.5,90.95" stroke="#d2d2d2" stroke-width="1.0" fill="none"/><path d="M548.2,71.6 V61 H552.8 V71.6 M552.8,71.6 V53.9 H558.6 V66" stroke="#5a5a5a" stroke-width="1" fill="none"/><path d="M547.6,71.6 H556" stroke="#5a5a5a" stroke-width="1"/><rect x="548.7" y="61.5" width="3.6" height="9.6" fill="#3a3a3a"/><path d="M560.4,59.4 H563.4 M560.4,59.4 V61.4" stroke="#255f86" stroke-width="1.1" fill="none"/><text x="557" y="70.6" font-family="Liberation Serif, serif" font-style="italic" font-size="12" fill="#5e5e5e">fx</text><path d="M573.6999999999999,90.95 L575.4,92.64999999999999 L577.1,90.95" stroke="#5e5e5e" stroke-width="1.0" fill="none"/><rect x="590.1" y="53.5" width="12.899999999999977" height="19.0" rx="1" stroke="#d2d2d2" stroke-width="1.1" fill="#292929"/><rect x="592.3000000000001" y="55.9" width="8.499999999999977" height="2.8" fill="#2f7fe0"/><rect x="591.85" y="60.15" width="2.1" height="2.1" fill="#f2f2f2"/><rect x="591.85" y="64.15" width="2.1" height="2.1" fill="#f2f2f2"/><rect x="591.85" y="68.15" width="2.1" height="2.1" fill="#f2f2f2"/><rect x="595.50" y="60.15" width="2.1" height="2.1" fill="#f2f2f2"/><rect x="595.50" y="64.15" width="2.1" height="2.1" fill="#f2f2f2"/><rect x="595.50" y="68.15" width="2.1" height="2.1" fill="#f2f2f2"/><rect x="599.15" y="60.15" width="2.1" height="2.1" fill="#f2f2f2"/><rect x="599.15" y="64.15" width="2.1" height="2.1" fill="#f2f2f2"/><rect x="599.15" y="68.15" width="2.1" height="2.1" fill="#f2f2f2"/><rect x="622.6" y="53.5" width="13.100000000000023" height="19.0" rx="1" stroke="#d2d2d2" stroke-width="1.1" fill="#292929"/><path d="M627.6,56.5 H633.5 M627.6,58.5 H633.5" stroke="#9a9a9a" stroke-width="0.9"/><rect x="624.45" y="60.15" width="2.1" height="2.1" fill="#f2f2f2"/><rect x="624.45" y="64.15" width="2.1" height="2.1" fill="#f2f2f2"/><rect x="624.45" y="68.15" width="2.1" height="2.1" fill="#f2f2f2"/><rect x="628.10" y="60.15" width="2.1" height="2.1" fill="#f2f2f2"/><rect x="628.10" y="64.15" width="2.1" height="2.1" fill="#f2f2f2"/><rect x="628.10" y="68.15" width="2.1" height="2.1" fill="#f2f2f2"/><rect x="631.75" y="60.15" width="2.1" height="2.1" fill="#f2f2f2"/><rect x="631.75" y="64.15" width="2.1" height="2.1" fill="#f2f2f2"/><rect x="631.75" y="68.15" width="2.1" height="2.1" fill="#f2f2f2"/><path d="M622.8,51.8 L618.2,60.2 H621.6 L618.8,66.6 L627,57.2 H623.6 L627.6,51.8 Z" fill="#f4b41a" stroke="#292929" stroke-width="0.8"/><path d="M674,54.2 H668.2 V71.5 H683 V63.5" stroke="#1f5f7c" stroke-width="1.1" fill="none"/><g transform="rotate(-42 678 61)" stroke="#1f5f7c" stroke-width="1" fill="#292929"><rect x="669.5" y="58.2" width="11" height="5.6" rx="1"/><rect x="680.5" y="57.4" width="4.5" height="7.2"/><rect x="685" y="59" width="3.4" height="4"/><path d="M671.5,60 H678 M671.5,62 H678" fill="none" stroke-width="0.7"/></g><path d="M673.9,90.75 L675.6,92.44999999999999 L677.3000000000001,90.75" stroke="#5e5e5e" stroke-width="1.0" fill="none"/><path d="M719.6,59 V54 H727.2 V71.5 H723" stroke="#d2d2d2" stroke-width="1" fill="none"/><path d="M715.4,64 V59.6 H722.8 V71.5 H719.6" stroke="#d2d2d2" stroke-width="1" fill="#292929"/><rect x="712.3" y="64.4" width="7.1" height="7.1" rx="1" stroke="#d2d2d2" stroke-width="1" fill="#292929"/><rect x="722.6" y="62.6" width="8" height="11" fill="#292929"/><path d="M726.2,73 V64 M722.4,67.6 L726.2,63.6 L730,67.6" stroke="#2f8fd8" stroke-width="1.15" fill="none"/><path d="M762,56.8 H770.2 L773.4,61.2 H762 Z" fill="#f4f4f4"/><rect x="762" y="64.4" width="14.1" height="4.5" rx=".6" fill="#f4f4f4"/><circle cx="764.6" cy="59" r="1" fill="#292929"/><circle cx="773.6" cy="66.6" r="1" fill="#292929"/><path d="M772.4,53.4 L773.3,56 L775.9,56.9 L773.3,57.8 L772.4,60.4 L771.5,57.8 L768.9,56.9 L771.5,56 Z" fill="#f4f4f4" stroke="#3a9be8" stroke-width="0.8"/><path d="M776.6,59.2 L777.1,60.6 L778.5,61.1 L777.1,61.6 L776.6,63 L776.1,61.6 L774.7,61.1 L776.1,60.6 Z" fill="#f4f4f4" stroke="#3a9be8" stroke-width="0.7"/><defs><linearGradient id="cpA" x1="0" y1="0" x2="0.25" y2="1"><stop offset="0" stop-color="#2b9df4"/><stop offset=".4" stop-color="#37c3a0"/><stop offset=".7" stop-color="#d8d240"/><stop offset="1" stop-color="#f39a2c"/></linearGradient><linearGradient id="cpB" x1="0.6" y1="0" x2="0.3" y2="1"><stop offset="0" stop-color="#a45cee"/><stop offset=".5" stop-color="#ee4f92"/><stop offset="1" stop-color="#f4763a"/></linearGradient></defs><path d="M803.8,56.6 H810.2 L804.8,68.2 H800.6 Z" fill="url(#cpA)" stroke="url(#cpA)" stroke-width="4.4" stroke-linejoin="round"/><path d="M812.4,59.6 H815 L813,69.2 H807 Z" fill="url(#cpB)" stroke="url(#cpB)" stroke-width="4.4" stroke-linejoin="round"/><path d="M810.8,58 L805.8,68.2" stroke="#1e1e22" stroke-width="1.7" stroke-linecap="round"/><path d="M1007.4,105.8 L1010,103.2 L1012.6,105.8" stroke="#e6e6e6" stroke-width="1.1" fill="none"/><path d="M11.6,7.2 H19.2 L21,9 V16.2 H11.6 Z" stroke="#e2e2e2" stroke-width="1" fill="none" stroke-linejoin="round"/><path d="M13.6,7.4 V10.6 H18.6 V7.4 M13.6,16 V12.8 H19 V16" stroke="#e2e2e2" stroke-width="0.9" fill="none"/><path d="M32.6,8 V11.6 H36.2" stroke="#8c8c8c" stroke-width="1" fill="none"/><path d="M32.8,11.4 C34.5,8 39.6,8 39.8,11.6 C39.8,13.4 38,14.6 35.6,16.4" stroke="#8c8c8c" stroke-width="1" fill="none"/><path d="M59.8,8 V11.6 H56.2" stroke="#8c8c8c" stroke-width="1" fill="none"/><path d="M59.6,11.4 C57.9,8 52.8,8 52.6,11.6 C52.6,13.4 54.4,14.6 56.8,16.4" stroke="#8c8c8c" stroke-width="1" fill="none"/><path d="M202.6,10 H207.4 L205,12.6 Z" stroke="#cfcfcf" stroke-width="0.8" fill="none"/><circle cx="439.6" cy="10.2" r="3" stroke="#d6d6d6" stroke-width="1" fill="none"/><path d="M437.4,12.5 L433.4,16.2" stroke="#d6d6d6" stroke-width="1.1"/><circle cx="919.3" cy="11.8" r="6.4" fill="#3b3b3b"/><circle cx="919.3" cy="8.9" r="1.9" stroke="#e0e0e0" stroke-width="0.9" fill="none"/><path d="M915.5,12.2 H923.1 C923.1,16.6 915.5,16.6 915.5,12.2 Z" stroke="#e0e0e0" stroke-width="0.9" fill="none"/><path d="M947.6,12.1 H954.2" stroke="#e6e6e6" stroke-width="1"/><rect x="976.4" y="10.2" width="5.6" height="5.4" rx="1.2" stroke="#e6e6e6" stroke-width="1" fill="none"/><path d="M978.2,10 V9.8 Q978.2,8.8 979.2,8.8 H982.6 Q983.8,8.8 983.8,10 V13.2 Q983.8,14.2 982.4,14.2" stroke="#e6e6e6" stroke-width="1" fill="none"/><path d="M1006,9.2 L1012.8,15.8 M1012.8,9.2 L1006,15.8" stroke="#e6e6e6" stroke-width="1"/><path d="M970,31.6 V37 H977.4 V35.6" stroke="#e8f5f1" stroke-width="0.9" fill="none"/><path d="M971.6,34.8 C972,31.8 974,30.8 976,30.8 V29 L979.2,32 L976,35 V33 C974.2,33 972.6,33.4 971.6,34.8 Z" stroke="#e8f5f1" stroke-width="0.85" fill="none" stroke-linejoin="round"/><path d="M1008.2,32.2 L1011.2,35.2 L1014.2,32.2" stroke="#e8f5f1" stroke-width="1" fill="none"/><path d="M9.3,122 V130.8 H18.1 V122" stroke="#e8e8e8" stroke-width=".95" fill="none"/><path d="M11.1,130.4 V126.4 M12.9,130.4 V124.6 M14.7,130.4 V127 M16.4,130.4 V125.2" stroke="#e8e8e8" stroke-width=".95"/><path d="M9.3,128.8 H18.1" stroke="#e8e8e8" stroke-width=".5" opacity=".8"/><path d="M8.7,147.9 H18.5 V157.5 H8.7 Z M8.7,151.1 H18.5 M8.7,154.3 H18.5 M12,147.9 V157.5 M15.3,147.9 V157.5" stroke="#e8e8e8" stroke-width="1" fill="none"/><rect x="8" y="176.6" width="4.6" height="5.6" stroke="#e8e8e8" stroke-width=".9" fill="none"/><rect x="14.4" y="173.8" width="5.2" height="4.6" stroke="#e8e8e8" stroke-width=".9" fill="none"/><rect x="14.4" y="180.6" width="5.2" height="4.8" stroke="#e8e8e8" stroke-width=".9" fill="none"/><path d="M12.6,178 H14.4 M12.6,181 H13.4 V183 H14.4 M8,178.6 H12.6 M14.4,182.4 H19.6 M14.4,175.6 H19.6" stroke="#e8e8e8" stroke-width=".7" fill="none"/><path d="M10,206 V201.3 H15.2 L18,204 V206.4 M15.2,201.3 V204 H18" stroke="#e8e8e8" stroke-width=".9" fill="none"/><text x="7" y="211.4" font-family="Liberation Sans, sans-serif" font-weight="700" font-size="4.6" fill="#e8e8e8" textLength="11" lengthAdjust="spacingAndGlyphs">DAX</text><path d="M10,232.4 V227.6 H15.2 L18,230.3 V232.8 M15.2,227.6 V230.3 H18" stroke="#e8e8e8" stroke-width=".9" fill="none"/><text x="7" y="238" font-family="Liberation Sans, sans-serif" font-weight="700" font-size="4.6" fill="#e8e8e8" textLength="12.4" lengthAdjust="spacingAndGlyphs">TMDL</text><path d="M771.8,124.2 L769.8,126.3 L771.8,128.4 M774.8,124.2 L772.8,126.3 L774.8,128.4" stroke="#fff" stroke-width="1.3" fill="none"/><path d="M770.4,143 H777.2 M772,145 H777.2 M774,147 H777.2" stroke="#f0e6fa" stroke-width=".9"/><text transform="translate(768.6 155.6) rotate(90)" font-family="Liberation Sans, sans-serif" font-weight="700" font-size="10.2" fill="#ffffff" textLength="27.4" lengthAdjust="spacingAndGlyphs">Filters</text><path d="M891.6,124.4 L893.6,126.5 L891.6,128.6 M894.6,124.4 L896.6,126.5 L894.6,128.6" stroke="#e8e8e8" stroke-width="1.3" fill="none"/><path d="M1011.8,124.4 L1013.8,126.5 L1011.8,128.6 M1014.8,124.4 L1016.8,126.5 L1014.8,128.6" stroke="#e8e8e8" stroke-width="1.3" fill="none"/><rect x="789" y="151.8" width="21" height="21.6" rx="2" fill="#2a2a2a"/><path d="M791.3,154.3 H807.7 M791.3,163.2 H807.7 M791.3,171.2 H807.7" stroke="#d8d8d8" stroke-width=".8"/><rect x="791.3" y="156.4" width="16.4" height="5.6" fill="#27b294"/><rect x="791.3" y="164.3" width="16.4" height="5.6" fill="#27b294"/><path d="M791.3,158.3 H807.7 M791.3,160.2 H807.7 M791.3,166.2 H807.7 M791.3,168.1 H807.7" stroke="#15705d" stroke-width=".6" stroke-dasharray="1 1"/><path d="M844,154.4 H836 V170 H846.4 V163" stroke="#dcdcdc" stroke-width="1" fill="none"/><path d="M844,154.4 L846.4,157" stroke="#dcdcdc" stroke-width="1"/><path d="M840.4,169.4 L842.4,164.4 L849.6,157.8 L851.6,160 L844.4,166.8 Z" stroke="#dcdcdc" stroke-width=".9" fill="#141414" stroke-linejoin="round"/><path d="M783.5,181 H794 L798.6,176.6 L803.2,181 H903" stroke="#4a4a4a" stroke-width="1" fill="none"/><circle cx="918.6" cy="150.7" r="3" stroke="#b8b8b8" stroke-width="1" fill="none"/><path d="M920.8,153 L923.6,156" stroke="#b8b8b8" stroke-width="1.1"/><path d="M915.6,171.6 L918,173.9 L915.6,176.2" stroke="#d8d8d8" stroke-width="1" fill="none"/><rect x="923.4" y="169.8" width="8" height="8" rx="1.6" stroke="#e0e0e0" stroke-width=".9" fill="none"/><path d="M923.4,172.6 H931.4 M923.4,175.2 H931.4 M926.1,169.8 V177.8 M928.8,169.8 V177.8" stroke="#e0e0e0" stroke-width=".8"/><rect x="867.2" y="401" width="21.4" height="10.2" rx="5.1" stroke="#c8c8c8" stroke-width=".9" fill="#141414"/><circle cx="872.4" cy="406.1" r="2.7" fill="#d0d0d0"/><text x="876.4" y="408" font-family="Liberation Sans, sans-serif" font-size="5.4" fill="#d0d0d0">Off</text><rect x="867.2" y="419" width="21.4" height="10.2" rx="5.1" fill="#27b294"/><circle cx="883.4" cy="424.1" r="2.7" fill="#1a1a1a"/><text x="870.6" y="426" font-family="Liberation Sans, sans-serif" font-size="5.4" fill="#0d3a30">On</text><circle cx="794.2" cy="324.7" r=".8" fill="#e0e0e0"/><circle cx="796.8" cy="324.7" r=".8" fill="#e0e0e0"/><circle cx="799.4" cy="324.7" r=".8" fill="#e0e0e0"/><g transform="translate(790.7 189.1)" fill="none" stroke-width=".9"><path d="M.5,0 V11.5 H12" stroke="#d4d4d4"/><rect x="1.5" y="1.2" width="5.5" height="2.6" fill="#1f7fe0"/><rect x="7" y="1.2" width="1.5" height="2.6" fill="#d4d4d4"/><path d="M1.5,6 H10.5 V8.6 H1.5" stroke="#d4d4d4" stroke-width=".8"/><path d="M6,6 V8.6" stroke="#d4d4d4" stroke-width=".7"/></g><g transform="translate(809.2 189.1)" fill="none" stroke-width=".9"><path d="M.5,0 V11.5 H12" stroke="#d4d4d4"/><path d="M2.6,11.5 V2.6 H5.4 V11.5 M7.6,11.5 V1 H10.4 V11.5" stroke="#d4d4d4" stroke-width=".8"/><rect x="3" y="3.4" width="2" height="4.4" fill="#1f7fe0"/></g><g transform="translate(828.0 189.1)" fill="none" stroke-width=".9"><path d="M.5,0 V11.5 H12" stroke="#d4d4d4"/><rect x="1" y=".6" width="10.5" height="2.2" fill="#1f7fe0"/><path d="M1,4.2 H7.6 V6.2 H1 M1,7.6 H9.4 V9.8 H1" stroke="#d4d4d4" stroke-width=".8"/></g><g transform="translate(846.8 189.1)" fill="none" stroke-width=".9"><path d="M.5,0 V11.5 H12" stroke="#d4d4d4"/><rect x="1.4" y=".6" width="2.4" height="10.9" fill="#1f7fe0"/><path d="M4.8,11.5 V4.4 H7.2 V11.5 M8.6,11.5 V3 H11 V11.5" stroke="#d4d4d4" stroke-width=".8"/></g><g transform="translate(865.3 189.1)" fill="none" stroke-width=".9"><path d="M.5,0 V11.5 H12" stroke="#d4d4d4"/><rect x="3.4" y="1.4" width="7.6" height="2.4" fill="#1f7fe0"/><path d="M1,1.4 H3.4 V3.8 H1 M1,6.4 H11 V8.8 H1" stroke="#d4d4d4" stroke-width=".8"/><rect x="8.4" y="6.4" width="2.6" height="2.4" fill="#1f7fe0"/></g><g transform="translate(884.0 189.1)" fill="none" stroke-width=".9"><path d="M.5,0 V11.5 H12" stroke="#d4d4d4"/><path d="M2.4,11.5 V.8 H5.4 V11.5 M7.4,11.5 V.8 H10.4 V11.5" stroke="#d4d4d4" stroke-width=".8"/><rect x="2.8" y="1.2" width="2.2" height="7" fill="#1f7fe0"/></g><g transform="translate(790.7 207.7)" fill="none" stroke-width=".9"><path d="M.5,0 V11.5 H12" stroke="#d4d4d4"/><path d="M1,9 L4.6,4.6 L7,6.6 L11,2" stroke="#d4d4d4" stroke-width=".8"/><path d="M1,10 L5,5.6 L7.8,3.4 L11,6" stroke="#1f7fe0" stroke-width=".9"/></g><g transform="translate(809.2 207.7)" fill="none" stroke-width=".9"><path d="M.5,11.5 L4.6,2 L7.2,6.4 L9.4,1.6 L12,9 V11.5 Z" stroke="#d4d4d4" stroke-width=".8"/><path d="M.8,11.3 L5.8,4 L11.4,11.3 Z" fill="#1f7fe0"/></g><g transform="translate(828.0 207.7)" fill="none" stroke-width=".9"><path d="M.5,0 V11.5 H12" stroke="#d4d4d4"/><path d="M1,2 L4.4,7.8 L7.6,2.4 L11.4,7 V4.6 L7.6,.4 L4.4,5 L1,.6 Z" fill="#1f7fe0"/><path d="M1,2.6 L4.4,8.6 L7.6,3.2 L11.4,8" stroke="#1f7fe0" stroke-width=".9"/></g><g transform="translate(846.8 207.7)" fill="none" stroke-width=".9"><path d="M.5,0 V11.5 H12" stroke="#d4d4d4"/><path d="M1.4,.8 H11.4 V8.4 L8.4,5.4 L5.4,8.4 L1.4,5 Z" fill="#1f7fe0"/></g><g transform="translate(865.3 207.7)" fill="none" stroke-width=".9"><path d="M.5,0 V11.5 H12" stroke="#d4d4d4"/><path d="M2.2,11.5 V3 H4.6 V11.5 M6.2,11.5 V5 H8.4 V11.5 M9.8,11.5 V2 H11.8 V11.5" stroke="#d4d4d4" stroke-width=".75"/><rect x="2.5" y="3.4" width="1.8" height="5" fill="#1f7fe0"/><path d="M1,9.6 L4,6.6 L7,8.6 L11.6,4" stroke="#d4d4d4" stroke-width=".8"/></g><g transform="translate(884.0 207.7)" fill="none" stroke-width=".9"><path d="M.5,0 V11.5 H12" stroke="#d4d4d4"/><path d="M2,11.5 V6 H4 V11.5 M4,11.5 V2 H6 V11.5 M8,11.5 V4 H10 V11.5 M10,11.5 V6.6 H12" stroke="#d4d4d4" stroke-width=".75"/><rect x="4.3" y="6" width="1.5" height="5" fill="#1f7fe0"/><path d="M1,10 L4.6,6 L7,8 L11.6,3.2" stroke="#d4d4d4" stroke-width=".8"/></g><g transform="translate(790.7 226.4)" fill="none" stroke-width=".9"><path d="M.5,0 V11.5 H12" stroke="#d4d4d4"/><path d="M1,2.4 L4.4,6.8 L7.4,6.4 L11.4,2.4 V7 L7.4,10.4 L4.4,10.8 L1,7 Z" fill="#1f7fe0"/><path d="M1,6 L4.4,9.6 L7.4,9.4 L11.4,6 V10.6 H1 Z" fill="#f08a1c"/><path d="M2.6,10.6 L5.6,8.6 L8.8,10.6 Z" fill="#f5d21c"/></g><g transform="translate(809.2 226.4)" fill="none" stroke-width=".9"><path d="M.5,0 V11.5 H12" stroke="#d4d4d4"/><path d="M1.8,11.5 V2.4 H3.8 V11.5 M5.2,8 V5.2 H7 V8 M8.4,11.5 V1 H10.6 V11.5" stroke="#d4d4d4" stroke-width=".75"/><rect x="5.4" y="4.4" width="1.6" height="4.4" fill="#1f7fe0"/></g><g transform="translate(828.0 226.4)" fill="none" stroke-width=".9"><rect x=".8" y=".6" width="10.6" height="2.6" fill="#1f7fe0"/><rect x="2" y="4.2" width="8.2" height="2.4" fill="#1f7fe0"/><rect x="3.4" y="7.6" width="5.4" height="2.2" fill="#1f7fe0"/><rect x="4.6" y="10.6" width="3" height="1.2" fill="#1f7fe0"/></g><g transform="translate(846.8 226.4)" fill="none" stroke-width=".9"><path d="M.5,0 V11.5 H12" stroke="#d4d4d4"/><rect x="2.4" y="8" width="1.5" height="1.5" fill="#d4d4d4"/><rect x="8.6" y=".8" width="1.5" height="1.5" fill="#d4d4d4"/><rect x="2.6" y="2.4" width="1.4" height="1.4" fill="#1f7fe0"/><rect x="5" y="4.2" width="1.4" height="1.4" fill="#1f7fe0"/><rect x="6.8" y="6.4" width="1.4" height="1.4" fill="#1f7fe0"/><rect x="8.6" y="7.6" width="1.4" height="1.4" fill="#1f7fe0"/><rect x="6" y="1.6" width="1.2" height="1.2" fill="#1f7fe0"/></g><g transform="translate(865.3 226.4)" fill="none" stroke-width=".9"><circle cx="6" cy="6" r="5.4" stroke="#d4d4d4" stroke-width=".85"/><path d="M6.4,.8 A5.2,5.2 0 0 1 10.8,8.4 L6.4,5.8 Z" fill="#1f7fe0"/></g><g transform="translate(884.0 226.4)" fill="none" stroke-width=".9"><circle cx="6" cy="6" r="4.2" stroke="#1f7fe0" stroke-width="2.3"/><path d="M6,.4 V3 M.9,8.4 L3.2,7.2" stroke="#141414" stroke-width=".9"/><circle cx="6" cy="6" r="5.5" stroke="#d4d4d4" stroke-width=".5" opacity=".7"/></g><g transform="translate(790.7 245.0)" fill="none" stroke-width=".9"><rect x=".5" y=".5" width="11.2" height="11.2" stroke="#d4d4d4" stroke-width=".8"/><rect x=".9" y=".9" width="5.4" height="10.4" fill="#1f7fe0"/><path d="M6.4,3.8 H11.6 M9,3.8 V11.6 M.6,6 H6.4" stroke="#d4d4d4" stroke-width=".75"/><path d="M.9,6 H6.3" stroke="#141414" stroke-width=".7"/></g><g transform="translate(809.2 245.0)" fill="none" stroke-width=".9"><circle cx="6" cy="5.2" r="4.4" stroke="#d4d4d4" stroke-width=".85"/><path d="M3.4,11.6 H8.6 M6,9.6 V11.6" stroke="#d4d4d4" stroke-width=".85"/><path d="M4.2,3 L6.6,2.4 L8,4.2 L6.6,6.8 L4.6,6 Z" fill="#1c8a5a"/><path d="M7.6,2.4 L8.8,3.4" stroke="#1f7fe0" stroke-width="1"/></g><g transform="translate(828.0 245.0)" fill="none" stroke-width=".9"><path d="M.8,1.6 L3.6,.8 L6,2.2 L8.4,.8 L11.4,1.6 V6.6 Q10,11 6,11.4 Q2,11 .8,6.6 Z" stroke="#d4d4d4" stroke-width=".8"/><path d="M1.2,2 L3.6,1.3 L5.6,2.6 V5.6 H1.2 Z" fill="#1f7fe0"/><path d="M6.6,6.4 H11 Q10.2,9.4 6.6,10.8 Z" fill="#1f7fe0"/></g><g transform="translate(846.8 245.0)" fill="none" stroke-width=".9"><path d="M6.2,0 L11,11.8 L6.2,8.6 L1.2,11.8 Z" fill="#1f7fe0"/><path d="M6.2,0 L6.2,8.6 L1.2,11.8 Z" fill="#3a9bf0"/></g><g transform="translate(865.3 245.0)" fill="none" stroke-width=".9"><path d="M.8,9.4 A5.4,5.4 0 0 1 11.4,9.4 H9 A3,3 0 0 0 3.2,9.4 Z" stroke="#d4d4d4" stroke-width=".8"/><path d="M6.4,3.9 A5.4,5.4 0 0 1 11.4,9.4 H9 A3,3 0 0 0 6.4,6.4 Z" fill="#1f7fe0"/><path d="M5,9.6 L7.8,6.2" stroke="#d4d4d4" stroke-width=".9"/></g><g transform="translate(884.0 245.0)" fill="none" stroke-width=".9"><rect x=".5" y="1.4" width="11.2" height="9.2" stroke="#d4d4d4" stroke-width=".85"/><text x="2" y="7.8" font-family="Liberation Sans, sans-serif" font-size="5" fill="#1f7fe0" stroke="none" textLength="8" lengthAdjust="spacingAndGlyphs">123</text><path d="M2,9 H10" stroke="#d4d4d4" stroke-width=".5"/></g><g transform="translate(790.7 263.7)" fill="none" stroke-width=".9"><rect x=".5" y=".5" width="11.2" height="11.2" stroke="#d4d4d4" stroke-width=".85"/><path d="M2,3 H9.6 M2,7.4 H7.6" stroke="#1f7fe0" stroke-width="1"/><path d="M2,5 H6 M2,9.4 H5.6" stroke="#d4d4d4" stroke-width=".7"/></g><g transform="translate(809.2 263.7)" fill="none" stroke-width=".9"><rect x=".5" y="1.2" width="11.2" height="8.8" rx="1" stroke="#d4d4d4" stroke-width=".85"/><path d="M2,11.4 H10.2" stroke="#d4d4d4" stroke-width=".8"/><path d="M2.6,7.6 L4.4,4.4 L6.2,7.6 Z" fill="#2cb84e"/><path d="M6.6,4 H10 L8.3,7.2 Z" fill="#e8464e"/></g><g transform="translate(828.0 263.7)" fill="none" stroke-width=".9"><rect x=".5" y=".8" width="10.6" height="9.8" stroke="#d4d4d4" stroke-width=".85"/><path d="M.5,3 H11.1" stroke="#d4d4d4" stroke-width=".8"/><rect x="2" y="4.4" width="2" height="1.8" fill="#d4d4d4"/><rect x="2" y="7.4" width="2" height="1.8" fill="#d4d4d4"/><path d="M5.8,5 H12 L9.8,7.6 V11.6 L8,10.6 V7.6 Z" fill="#141414" stroke="#d4d4d4" stroke-width=".8"/></g><g transform="translate(846.8 263.7)" fill="none" stroke-width=".9"><rect x=".5" y=".5" width="11.2" height="11.2" rx=".8" stroke="#d4d4d4" stroke-width=".85"/><path d="M.5,4.2 H11.7 M.5,8 H11.7 M4.2,.5 V11.7 M8,.5 V11.7" stroke="#d4d4d4" stroke-width=".75"/></g><g transform="translate(865.3 263.7)" fill="none" stroke-width=".9"><rect x=".5" y=".5" width="11.2" height="11.2" rx=".8" stroke="#d4d4d4" stroke-width=".85"/><path d="M.5,4.2 H11.7 M.5,8 H11.7 M4.2,.5 V11.7 M8,.5 V11.7" stroke="#d4d4d4" stroke-width=".75"/><rect x="8.4" y="4.6" width="3" height="3" fill="#1f7fe0"/><rect x=".9" y="8.4" width="3" height="3" fill="#1f7fe0"/><rect x="4.6" y="8.4" width="3" height="3" fill="#1f7fe0"/><rect x="8.4" y="8.4" width="3" height="3" fill="#1f7fe0"/></g><g transform="translate(884.0 263.7)" fill="none" stroke-width=".9"><text x="2.6" y="10.6" font-family="Liberation Sans, sans-serif" font-size="11" fill="#2f8fe6" stroke="none" textLength="6.6" lengthAdjust="spacingAndGlyphs">R</text></g><g transform="translate(790.7 282.4)" fill="none" stroke-width=".9"><text x="-.2" y="9.6" font-family="Liberation Sans, sans-serif" font-size="10.6" fill="#2f8fe6" stroke="none" textLength="12.4" lengthAdjust="spacingAndGlyphs">Py</text></g><g transform="translate(809.2 282.4)" fill="none" stroke-width=".9"><path d="M.8,.4 V11.4 H12" stroke="#d4d4d4" stroke-width=".85"/><path d="M1.4,2.4 H9.4" stroke="#1f7fe0" stroke-width=".8"/><circle cx="10.2" cy="2.4" r="1.3" stroke="#1f7fe0" stroke-width=".8"/><path d="M1.4,5.6 H6.6 M1.4,8.6 H4.6" stroke="#d4d4d4" stroke-width=".8"/><circle cx="7.2" cy="5.6" r=".8" fill="#d4d4d4"/><circle cx="5" cy="8.6" r=".8" fill="#d4d4d4"/></g><g transform="translate(828.0 282.4)" fill="none" stroke-width=".9"><rect x=".4" y="4.4" width="3.6" height="3" rx=".6" fill="#1f7fe0"/><path d="M4,5.9 H6.4 M6.4,1.6 V10.4 M6.4,1.6 H8 M6.4,4.6 H8 M6.4,7.4 H8 M6.4,10.4 H8" stroke="#d4d4d4" stroke-width=".75"/><rect x="8" y=".4" width="3.4" height="2.4" rx=".5" fill="#1f7fe0"/><rect x="8" y="3.4" width="3.4" height="2.4" rx=".5" fill="#1f7fe0"/><rect x="8" y="6.2" width="3.4" height="2.4" rx=".5" fill="#1f7fe0"/><rect x="8" y="9.2" width="3.4" height="2.4" rx=".5" fill="#1f7fe0"/></g><g transform="translate(846.8 282.4)" fill="none" stroke-width=".9"><path d="M.6,1 H11.6 V8.4 H4.6 L2.2,10.8 V8.4 H.6 Z" stroke="#2f8fe6" stroke-width=".9" stroke-linejoin="round"/></g><g transform="translate(865.3 282.4)" fill="none" stroke-width=".9"><path d="M1.4,.5 H7.8 L10.6,3.2 V11.6 H1.4 Z M7.8,.5 V3.2 H10.6" stroke="#d4d4d4" stroke-width=".85" stroke-linejoin="round"/><circle cx="2.2" cy="4.6" r="1" fill="#1f7fe0"/><path d="M4.6,6.4 H8.8 M4.6,8.2 H8.8 M6,4.6 H8.8" stroke="#1f7fe0" stroke-width=".6"/></g><g transform="translate(884.0 282.4)" fill="none" stroke-width=".9"><path d="M3,1 H9.4 V4.4 Q9.4,7.4 6.2,7.4 Q3,7.4 3,4.4 Z" stroke="#d4d4d4" stroke-width=".85"/><path d="M3,2 H.8 Q.8,5 3.2,5 M9.4,2 H11.6 Q11.6,5 9.2,5" stroke="#d4d4d4" stroke-width=".8"/><path d="M6.2,7.4 V9.6 M4.4,9.8 H8" stroke="#d4d4d4" stroke-width=".85"/><path d="M3.4,11.4 H9" stroke="#1f7fe0" stroke-width="1.2"/><path d="M3,1.2 H9.4" stroke="#1f7fe0" stroke-width="1"/></g><g transform="translate(790.7 301.0)" fill="none" stroke-width=".9"><path d="M1.2,.2 H7.6 L10.8,3.4 V12.4 H1.2 Z M7.6,.2 V3.4 H10.8" stroke="#d4d4d4" stroke-width=".9" stroke-linejoin="round"/><path d="M3.6,10.8 V8.4 M6,10.8 V5.6 M8.4,10.8 V7.2" stroke="#d4d4d4" stroke-width="1.1"/></g><g transform="translate(809.2 301.0)" fill="none" stroke-width=".9"><rect x="1" y="2.4" width="10.8" height="8.4" stroke="#d4d4d4" stroke-width=".85"/><text x="3.6" y="8.6" font-family="Liberation Sans, sans-serif" font-size="5" fill="#1f7fe0" stroke="none" textLength="7.4" lengthAdjust="spacingAndGlyphs">123</text><path d="M3.2,-.6 L.6,3.8 H2.6 L1,7.4 L5.4,2.6 H3.4 L5.6,-.6 Z" fill="#f2a01c" stroke="#141414" stroke-width=".4"/></g><g transform="translate(828.0 301.0)" fill="none" stroke-width=".9"><path d="M5.6,.8 H10.2 V4.4 M1.4,7 V10.8 H5" stroke="#d4d4d4" stroke-width=".8"/><rect x="6.6" y="1.6" width="2.8" height="2.4" fill="#d4d4d4" opacity=".8"/><rect x="2.2" y="7.6" width="2.4" height="2.4" fill="#d4d4d4" opacity=".5"/><rect x="3.6" y="4" width="2" height="2" fill="#1f7fe0"/><path d="M5.8,5.6 H12.2 L9.9,8.2 V12 L8.1,11 V8.2 Z" fill="#141414" stroke="#d4d4d4" stroke-width=".8"/><path d="M3.2,-.6 L.6,3.8 H2.6 L1,7.4 L5.4,2.6 H3.4 L5.6,-.6 Z" fill="#f2a01c" stroke="#141414" stroke-width=".4"/></g><g transform="translate(846.8 301.0)" fill="none" stroke-width=".9"><path d="M4.6,.8 H11.4 V5 M11.4,8 V11.4 H7.4 M4,11.4 H1.4 V6.6" stroke="#2f8fe6" stroke-width=".95"/><path d="M9.8,2.6 L7.6,5.4 L8.4,7.4 L6.4,9.6" stroke="#2f8fe6" stroke-width=".9"/><rect x=".4" y="-.2" width="2.6" height="5" rx="1.2" stroke="#f08a1c" stroke-width=".9"/><path d="M10.4,8.2 L11.2,9.8 L12.8,10 L11.6,11.2 L11.9,12.8 L10.4,12 L8.9,12.8 L9.2,11.2 L8,10 L9.6,9.8 Z" fill="#f08a1c"/></g><g transform="translate(865.3 301.0)" fill="none" stroke-width=".9"><path d="M6,.4 L11.6,6 L6,11.6 L.4,6 Z" stroke="#7a4fc0" stroke-width=".95" stroke-linejoin="round"/><path d="M4.4,3.4 L7,6 L4.4,8.6 M7.4,3.2 L9.8,6" stroke="#7a4fc0" stroke-width=".9"/></g><g transform="translate(884.0 301.0)" fill="none" stroke-width=".9"><path d="M.6,1 H7.6 L12,6 L7.6,11 H.6 L5,6 Z" stroke="#2f8fe6" stroke-width=".95" stroke-linejoin="round"/><path d="M2.6,11 L9.2,3.2 M5.4,11 L10.6,4.6" stroke="#2f8fe6" stroke-width=".85"/></g><rect x="160.6" y="196.1" width="13.8" height="13.7" fill="#dcdce2" opacity=".75"/><rect x="160.90" y="199.94" width="3.40" height="9.86" fill="#70d070"/><rect x="165.80" y="203.22" width="3.20" height="6.58" fill="#ea4a68"/><rect x="170.20" y="197.74" width="3.40" height="12.06" fill="#22a0ea"/><rect x="516.2" y="133.2" width="12.8" height="13.8" fill="#dcdce2" opacity=".75"/><rect x="516.48" y="137.06" width="3.15" height="9.94" fill="#70d070"/><rect x="521.02" y="140.38" width="2.97" height="6.62" fill="#ea4a68"/><rect x="525.10" y="134.86" width="3.15" height="12.14" fill="#22a0ea"/><rect x="640.4" y="291" width="13.6" height="13.7" fill="#dcdce2" opacity=".75"/><rect x="640.70" y="294.84" width="3.35" height="9.86" fill="#70d070"/><rect x="645.52" y="298.12" width="3.15" height="6.58" fill="#ea4a68"/><rect x="649.86" y="292.64" width="3.35" height="12.06" fill="#22a0ea"/><circle cx="357" cy="202.3" r="2.9" fill="#56399a"/><circle cx="363.2" cy="202.3" r="2.9" fill="#56399a"/><path d="M353.1,209.8 V208.4 Q353.1,205.4 357,205.4 Q360.1,205.4 360.1,208.4 Q360.1,205.4 363.2,205.4 Q366.9,205.4 366.9,208.4 V209.8 Z" fill="#56399a"/><rect x="538" y="196.2" width="6.2" height="7.6" rx="1.8" fill="#f6bd28"/><circle cx="539.8" cy="200.4" r=".5" fill="#8a6a3a"/><circle cx="542.8" cy="200.4" r=".55" fill="#8a6a3a"/><path d="M535.9,209.8 Q535.9,204 541.2,204 Q546.6,204 546.6,209.8 Z" fill="#6b45b0"/><path d="M540.2,204.6 H542.2 L541.8,209.8 H540.6 Z" fill="#5a5a5a"/><path d="M705.3000000000001,197.8 L706.2,199.6 L707.1,197.8 L706.9000000000001,200.6 Q708.9000000000001,202 708.9000000000001,204.2 Q708.9000000000001,206.6 706.2,206.6 Q703.5,206.6 703.5,204.2 Q703.5,202 705.5,200.6 Z" fill="#161616"/><path d="M710.7,197.8 L711.6,199.6 L712.5,197.8 L712.3000000000001,200.6 Q714.3000000000001,202 714.3000000000001,204.2 Q714.3000000000001,206.6 711.6,206.6 Q708.9,206.6 708.9,204.2 Q708.9,202 710.9,200.6 Z" fill="#161616"/><rect x="326" y="291" width="14.4" height="12" fill="#dadae0" opacity=".7"/><path d="M329.6,291 V303 M333.2,291 V303 M336.8,291 V303 M326,295 H340.4 M326,299 H340.4" stroke="#c6c6cc" stroke-width=".5"/><path d="M326.4,293 L333.7,299.8 L336,298.4 L340.4,302.7" stroke="#f0405c" stroke-width="1.25" fill="none" stroke-linejoin="round"/><rect x="37.4" y="510" width="9.2" height="6.6" rx="1" stroke="#e8e8e8" stroke-width="1.1" fill="none"/><path d="M40,519 H44 M42,516.6 V519" stroke="#e8e8e8" stroke-width="1"/><rect x="34.2" y="523.2" width="15.8" height="2" rx="1" fill="#1aab8c"/><rect x="68" y="509.2" width="6.8" height="11" rx="1.4" stroke="#e0e0e0" stroke-width="1" fill="none"/><path d="M70.4,518.4 H72.4" stroke="#e0e0e0" stroke-width=".9"/><path d="M92.4,513.6 L89.8,516 L92.4,518.4 Z" stroke="#9a9a9a" stroke-width=".8" fill="none"/><path d="M104,513.6 L106.6,516 L104,518.4 Z" stroke="#9a9a9a" stroke-width=".8" fill="none"/><path d="M253.4,515.8 H259.6 M256.5,512.7 V518.9" stroke="#1a1a1a" stroke-width="1.5"/><path d="M883.2,536.4 H885.6" stroke="#e0e0e0" stroke-width="1"/><path d="M889.1,536.4 H955.6" stroke="#b8b8b8" stroke-width=".8"/><rect x="913.7" y="532.8" width="2.7" height="7.2" rx=".6" fill="#f4f4f4"/><path d="M922.1,534.4 V538.2" stroke="#e0e0e0" stroke-width=".9"/><path d="M959.2,536.4 H964.2 M961.7,533.9 V538.9" stroke="#e8e8e8" stroke-width="1"/><rect x="1002.2" y="533.2" width="9.2" height="6.2" rx=".8" stroke="#e0e0e0" stroke-width=".9" fill="#555"/><path d="M1003.4,535.4 V534.4 H1004.8 M1010.2,535.4 V534.4 H1008.8 M1003.4,537.2 V538.2 H1004.8 M1010.2,537.2 V538.2 H1008.8" stroke="#f0f0f0" stroke-width=".7" fill="none"/><rect x="13.3" y="553.8" width="3.4" height="11.4" fill="#2f8fe8"/><path d="M13.3,556.6 H16.7 M13.3,559.4 H16.7 M13.3,562.2 H16.7" stroke="#1d1d1d" stroke-width=".5" opacity=".7"/><path d="M23.2,554.6 C26,558 28.8,560.4 28.8,563 A5.4,5.4 0 0 1 18,563 C18,560.4 20.6,558 23.2,554.6 Z" fill="#2f9bf0"/><circle cx="25.6" cy="553.6" r="5.2" fill="#f08c7e"/><text x="23.6" y="556.3" font-family="Liberation Sans, sans-serif" font-size="7.4" fill="#3a1a14">5</text><g stroke="#ececec" stroke-width="1.2" fill="none" stroke-linecap="round"><path d="M34.6,553 V557.4 M36.2,555 Q37,558 39.4,557.2 Q40.6,556.6 40,554.6 M41.4,557.4 H46.4 M42.6,554.2 Q44,553 45,554.6 M48.4,557.4 Q50,558.4 51.6,557.2 V554.4 M53,557.4 H58.4 Q59.4,557.2 59.2,555.4 Q58.4,553.4 56.8,555.2 M60.6,556 Q61.6,559.6 62.8,556.6"/><circle cx="44" cy="559.4" r=".45" fill="#e6e6e6"/><circle cx="50" cy="552.6" r=".45" fill="#e6e6e6"/><path d="M35.6,551.4 L36.6,550.8"/></g><g stroke="#b4b4b4" stroke-width="1.1" fill="none" stroke-linecap="round"><path d="M35,565.4 Q35.2,568.8 37.8,568 Q38.6,567.4 38.2,565.6 M40.4,563 V568 M41.8,568 H43.6 M44.8,563.2 V568"/><circle cx="36.6" cy="563.6" r=".4" fill="#a8a8a8"/><path d="M43.6,562 Q44.6,561.2 45.6,562"/></g><rect x="311.8" y="552.3" width="7.4" height="7.4" rx=".6" fill="#3aa8f0"/><rect x="319.9" y="552.3" width="7.4" height="7.4" rx=".6" fill="#36a2ee"/><rect x="311.8" y="560.4" width="7.4" height="7.4" rx=".6" fill="#2a96e8"/><rect x="319.9" y="560.4" width="7.4" height="7.4" rx=".6" fill="#2690e4"/><circle cx="348.5" cy="559.2" r="3.3" stroke="#f0f0f0" stroke-width="1.2" fill="none"/><path d="M350.9,561.7 L353.4,564.3" stroke="#f0f0f0" stroke-width="1.3" stroke-linecap="round"/><rect x="490.9" y="556" width="11.4" height="10.8" rx="1" fill="#6e6e6e"/><rect x="495" y="551.8" width="12" height="11.4" rx="1" fill="#ececec"/><circle cx="528.3" cy="560" r="7.4" fill="#e8b22c"/><path d="M528.3,560 L521.9,556.3 A7.4,7.4 0 0 1 534.7,556.3 Z" fill="#dc4437"/><path d="M528.3,560 L521.9,556.3 A7.4,7.4 0 0 0 528.3,567.4 Z" fill="#2c9f4c"/><circle cx="528.3" cy="560" r="3.4" fill="#f4f4f4"/><circle cx="528.3" cy="560" r="2.6" fill="#3a7be0"/><circle cx="533.6" cy="554.6" r="4" fill="#c9b49c"/><circle cx="533.6" cy="553.4" r="1.6" fill="#8a6a58"/><path d="M530.6,557 Q533.6,554.4 536.6,557 Q535.4,558.6 533.6,558.6 Q531.8,558.6 530.6,557 Z" fill="#e8e0d8"/><path d="M557,552.6 A7.2,7.2 0 1 1 553.2,566 L549.6,567.2 L550.8,563.8 A7.2,7.2 0 0 1 557,552.6 Z" fill="#27d366"/><path d="M554.2,556.8 Q553,558 554,560 Q555.6,563 558.8,564 Q560.6,564.2 561,562.6 L559.2,561.6 L558.4,562.4 Q556.4,561.6 555.6,559.4 L556.4,558.6 L555.6,556.8 Z" fill="#1d1d1d" opacity=".85"/><circle cx="563.3" cy="553.7" r="4.9" fill="#4ab0f0"/><text x="559.6" y="556" font-family="Liberation Sans, sans-serif" font-size="6.2" fill="#10222e" textLength="7.4" lengthAdjust="spacingAndGlyphs">24</text><circle cx="587.3" cy="560" r="7.4" fill="#2a9fdc"/><path d="M582.6,560.2 L591.4,556.4 L590,564.4 L587,562.4 L585.8,563.8 L585.6,561.6 Z" fill="#f4f8fc"/><rect x="589" y="552.2" width="9.4" height="6.6" rx="3.3" fill="#e04848"/><text x="590.8" y="557.3" font-family="Liberation Sans, sans-serif" font-size="4.8" fill="#ffd8d8" textLength="5.8" lengthAdjust="spacingAndGlyphs">05</text><path d="M608,554.6 Q608,553 609.4,553 H613.8 L615.6,554.8 H623.8 Q625.2,554.8 625.2,556.2 V566 Q625.2,567.3 623.8,567.3 H609.4 Q608,567.3 608,566 Z" fill="#f7c234"/><path d="M608,557 H625.2 V566 Q625.2,567.3 623.8,567.3 H609.4 Q608,567.3 608,566 Z" fill="#fad458"/><rect x="610.6" y="562.8" width="12" height="4.5" rx=".8" fill="#2d7fd8"/><circle cx="645.6" cy="560" r="7.4" fill="#1ed760"/><path d="M641.2,557.4 Q645.8,556 650.2,558.2 M641.8,560 Q645.8,558.8 649.4,560.6 M642.4,562.4 Q645.6,561.6 648.6,563" stroke="#161616" stroke-width="1.2" fill="none" stroke-linecap="round"/><rect x="668" y="553.7" width="13.7" height="13.6" rx="1.6" fill="#0b66c2"/><path d="M671,559 V564.8 M674,564.8 V559 M674,561.4 Q674,559.2 676.2,559.2 Q678.4,559.2 678.4,561.4 V564.8" stroke="#fff" stroke-width="1.5" fill="none"/><circle cx="671" cy="556.8" r=".95" fill="#fff"/><circle cx="681.1" cy="552.9" r="4.9" fill="#4ab0f0"/><text x="679.3" y="555.2" font-family="Liberation Sans, sans-serif" font-size="6.4" fill="#10222e">9</text><rect x="692.1" y="546.8" width="25.9" height="26" rx="3" fill="#2f2f2f"/><defs><linearGradient id="pbi" x1="0" y1="0" x2="1" y2="1"><stop offset="0" stop-color="#f6d860"/><stop offset="1" stop-color="#d89a10"/></linearGradient></defs><rect x="705.2" y="551.8" width="5.2" height="16.4" rx="1" fill="#e8a818"/><rect x="701.2" y="556.6" width="5.4" height="11.6" rx="1" fill="#f2c030"/><rect x="697.5" y="561.4" width="5.2" height="6.8" rx="1" fill="url(#pbi)"/><rect x="698.9" y="571" width="11" height="1.9" rx=".95" fill="#4aa8ea"/><rect x="526.5999999999999" y="571.3" width="3.4" height="1.4" rx=".7" fill="#8a8a8a"/><rect x="555.3" y="571.3" width="3.4" height="1.4" rx=".7" fill="#8a8a8a"/><rect x="585.5999999999999" y="571.3" width="3.4" height="1.4" rx=".7" fill="#8a8a8a"/><rect x="614.8" y="571.3" width="3.4" height="1.4" rx=".7" fill="#8a8a8a"/><rect x="643.9" y="571.3" width="3.4" height="1.4" rx=".7" fill="#8a8a8a"/><rect x="673.3" y="571.3" width="3.4" height="1.4" rx=".7" fill="#8a8a8a"/><path d="M876.2,562.2 L879.8,558 L883.4,562.2" stroke="#f0f0f0" stroke-width="1.1" fill="none"/><path d="M925,558.6 Q930.2,553.8 935.6,558.6 M926.8,560.4 Q930.2,557.4 933.8,560.4 M928.6,562 Q930.2,560.6 932,562" stroke="#f0f0f0" stroke-width="1" fill="none"/><circle cx="930.3" cy="563.2" r=".8" fill="#f0f0f0"/><path d="M941,558.6 H943 L945.6,556.2 V564 L943,561.6 H941 Z" stroke="#f0f0f0" stroke-width=".9" fill="none" stroke-linejoin="round"/><path d="M947,558 Q948.4,560 947,562.2 M948.6,556.6 Q951,560 948.6,563.6" stroke="#f0f0f0" stroke-width=".85" fill="none"/><rect x="957.4" y="557.6" width="8.8" height="5.8" rx="1.2" stroke="#f0f0f0" stroke-width=".95" fill="none"/><path d="M966.4,559.4 V561.6" stroke="#f0f0f0" stroke-width="1.1"/><path d="M959.4,555 Q962.6,555 961.4,558.4 Q959.4,560.6 957.8,558.6 Q958.2,556 959.4,555 Z" fill="#f0f0f0" stroke="#1d1d1d" stroke-width=".4"/></svg>
</div></body></html>
